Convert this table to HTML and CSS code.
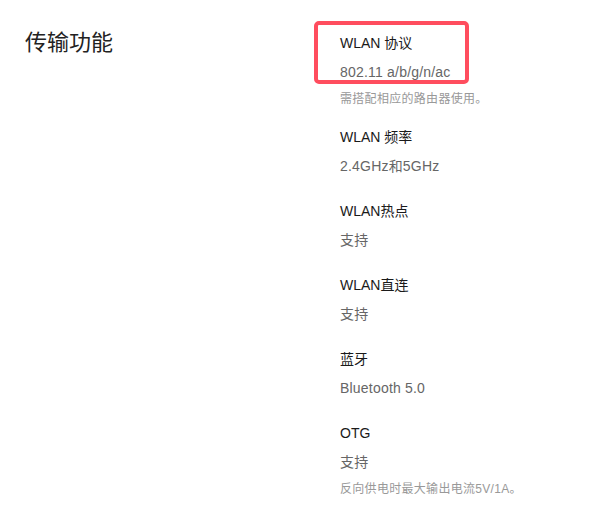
FILE: index.html
```html
<!DOCTYPE html>
<html lang="zh-CN">
<head>
<meta charset="utf-8">
<title>传输功能</title>
<link rel="stylesheet" href="styles.css">
</head>
<body>
<div class="page">
  <h2 class="section-title">传输功能</h2>
  <div class="specs">
    <div class="item">
      <div class="label">WLAN 协议</div>
      <div class="value">802.11 a/b/g/n/ac</div>
      <div class="note">需搭配相应的路由器使用。</div>
    </div>
    <div class="item">
      <div class="label">WLAN 频率</div>
      <div class="value">2.4GHz和5GHz</div>
    </div>
    <div class="item">
      <div class="label">WLAN热点</div>
      <div class="value">支持</div>
    </div>
    <div class="item">
      <div class="label">WLAN直连</div>
      <div class="value">支持</div>
    </div>
    <div class="item">
      <div class="label">蓝牙</div>
      <div class="value">Bluetooth 5.0</div>
    </div>
    <div class="item">
      <div class="label">OTG</div>
      <div class="value">支持</div>
      <div class="note">反向供电时最大输出电流5V/1A。</div>
    </div>
  </div>
  <div class="highlight"></div>
</div>
</body>
</html>
```
FILE: styles.css
```css
* { box-sizing: border-box; }
html, body { margin: 0; padding: 0; background: #fff; }
body {
  font-family: "Liberation Sans", "Noto Sans CJK SC", sans-serif;
  color: #1a1a1a;
}
.page {
  position: relative;
  display: grid;
  grid-template-columns: 315px 1fr;
  padding: 28px 0 0 25px;
  height: 513px;
}
.section-title {
  margin: 0;
  font-size: 22px;
  line-height: 30px;
  font-weight: normal;
  color: #222;
}
.specs {
  margin-top: 5px;
  display: flex;
  flex-direction: column;
  gap: 25px;
}
.item { display: flex; flex-direction: column; }
.label {
  font-size: 14px;
  line-height: 20px;
  color: #1a1a1a;
}
.value {
  margin-top: 9px;
  font-size: 14px;
  line-height: 20px;
  letter-spacing: 0.2px;
  color: #666;
}
.note {
  margin-top: 9px;
  margin-bottom: -5px;
  font-size: 12px;
  line-height: 16px;
  letter-spacing: 0.3px;
  color: #999;
}
.highlight {
  position: absolute;
  left: 314px;
  top: 21px;
  width: 155px;
  height: 63px;
  border: 4px solid #ff4d5e;
  border-radius: 5px;
  pointer-events: none;
}
```
